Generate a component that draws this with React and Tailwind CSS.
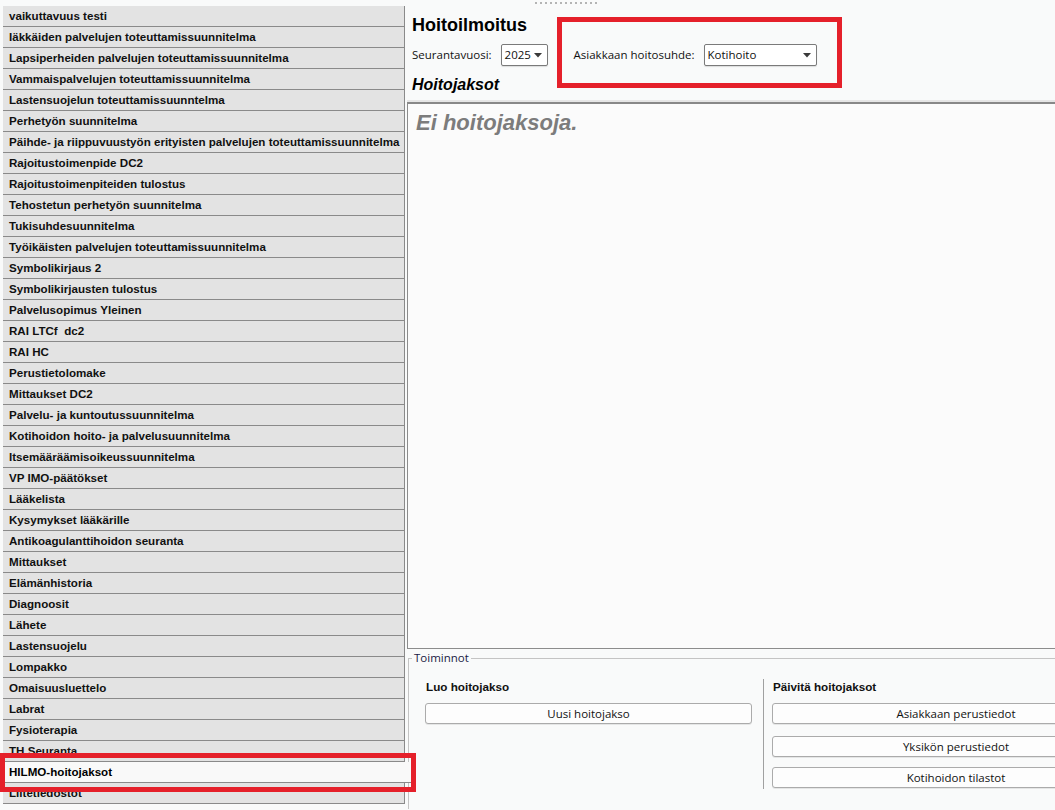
import React from "react";

const items = [
  "vaikuttavuus testi",
  "Iäkkäiden palvelujen toteuttamissuunnitelma",
  "Lapsiperheiden palvelujen toteuttamissuunnitelma",
  "Vammaispalvelujen toteuttamissuunnitelma",
  "Lastensuojelun toteuttamissuunntelma",
  "Perhetyön suunnitelma",
  "Päihde- ja riippuvuustyön erityisten palvelujen toteuttamissuunnitelma",
  "Rajoitustoimenpide DC2",
  "Rajoitustoimenpiteiden tulostus",
  "Tehostetun perhetyön suunnitelma",
  "Tukisuhdesuunnitelma",
  "Työikäisten palvelujen toteuttamissuunnitelma",
  "Symbolikirjaus 2",
  "Symbolikirjausten tulostus",
  "Palvelusopimus Yleinen",
  "RAI LTCf  dc2",
  "RAI HC",
  "Perustietolomake",
  "Mittaukset DC2",
  "Palvelu- ja kuntoutussuunnitelma",
  "Kotihoidon hoito- ja palvelusuunnitelma",
  "Itsemääräämisoikeussuunnitelma",
  "VP IMO-päätökset",
  "Lääkelista",
  "Kysymykset lääkärille",
  "Antikoagulanttihoidon seuranta",
  "Mittaukset",
  "Elämänhistoria",
  "Diagnoosit",
  "Lähete",
  "Lastensuojelu",
  "Lompakko",
  "Omaisuusluettelo",
  "Labrat",
  "Fysioterapia",
  "TH Seuranta",
  "HILMO-hoitojaksot",
  "Liitetiedostot",
];

const arial = { fontFamily: '"Liberation Sans", Arial, sans-serif' };
const ui = { fontFamily: '"Open Sans", "DejaVu Sans", sans-serif' };

function Arrow() {
  return (
    <svg width="8" height="5" viewBox="0 0 8 5" className="shrink-0">
      <path d="M0 0 H8 L4 4.5 Z" fill="#3a3a3a" />
    </svg>
  );
}

function Select({ value, w }) {
  return (
    <div
      className={`h-[22px] ${w} flex items-center justify-between pl-[3px] pr-[5px] bg-white border border-[#7a7a7a] rounded-[2px] shadow-[0_1px_1px_rgba(0,0,0,0.12)] text-[11.5px] text-[#111]`}
      style={ui}
    >
      <span>{value}</span>
      <Arrow />
    </div>
  );
}

function Btn({ children, cls }) {
  return (
    <div
      className={`h-[21px] flex items-center justify-center bg-[#fdfdfd] border border-[#ababab] rounded-[3px] shadow-[0_1px_0_rgba(0,0,0,0.08)] text-[11.5px] text-[#111] ${cls}`}
      style={ui}
    >
      {children}
    </div>
  );
}

export default function App() {
  return (
    <div className="relative w-[1055px] h-[810px] overflow-hidden bg-[#f9fafa] flex">
      {/* left list */}
      <div className="w-[405px] shrink-0 pt-[6px] pl-[3px]">
        {items.map((t, i) => {
          const sel = t === "HILMO-hoitojaksot";
          return (
            <div
              key={i}
              className={
                sel
                  ? "relative z-10 h-[21px] mr-[-8px] bg-[#f9f9f9] border-b border-[#8a8a8a] pl-[6px] flex items-center text-[11.6px] font-bold text-black whitespace-pre"
                  : "h-[21px] bg-[#e3e3e3] border-b border-r border-[#8a8a8a] pl-[6px] flex items-center text-[11.6px] font-bold text-[#111] whitespace-pre"
              }
              style={arial}
            >
              {t}
            </div>
          );
        })}
      </div>

      {/* right panel */}
      <div className="w-[760px] shrink-0 flex flex-col">
        <div className="h-[6px] flex items-center pl-[130px] gap-[3px]">
          {Array.from({ length: 13 }).map((_, i) => (
            <div key={i} className="w-[2px] h-[2px] bg-[#b4b4b4]" />
          ))}
        </div>

        <div className="mt-[8px] pl-[7px] h-[22px] leading-[22px] text-[18px] font-bold text-black" style={arial}>
          Hoitoilmoitus
        </div>

        <div className="mt-[8px] pl-[7px] h-[22px] flex items-center">
          <span className="text-[11.5px] text-[#111]" style={ui}>Seurantavuosi:</span>
          <div className="ml-[9px]">
            <Select value="2025" w="w-[47px]" />
          </div>
          <span className="ml-[26px] text-[11.5px] text-[#111]" style={ui}>Asiakkaan hoitosuhde:</span>
          <div className="ml-[9px]">
            <Select value="Kotihoito" w="w-[113px]" />
          </div>
        </div>

        <div className="mt-[9px] pl-[7px] h-[20px] leading-[20px] text-[16px] font-bold italic text-black" style={arial}>
          Hoitojaksot
        </div>

        <div className="mt-[7px] ml-[2px] h-[547px] bg-[#fbfbfb] border border-[#8c8c8c] border-t-2 border-t-[#888888] shadow-[0_-2px_0_#e6e6e6] pl-[8px] pt-[6px]">
          <div className="text-[22px] leading-[26px] font-bold italic text-[#7c7c7c]" style={arial}>
            Ei hoitojaksoja.
          </div>
        </div>

        <fieldset className="mt-[1px] ml-[3px] border-t border-l border-[#c4c4c4] pl-[16px] pb-[20px]">
          <legend className="ml-[-13px] px-[2px] text-[11.5px] leading-[16px] text-[#1a1a44]" style={ui}>
            Toiminnot
          </legend>
          <div className="mt-[13px] flex">
            <div className="w-[328px] flex flex-col">
              <div className="pl-[1px] h-[16px] leading-[16px] text-[11.7px] font-bold text-[#111]" style={arial}>
                Luo hoitojakso
              </div>
              <Btn cls="mt-[8px] w-[327px]">Uusi hoitojakso</Btn>
            </div>
            <div className="ml-[10px] w-px h-[110px] bg-[#a0a0a0]" />
            <div className="ml-[8px] w-[368px] flex flex-col">
              <div className="pl-[1px] h-[16px] leading-[16px] text-[11.7px] font-bold text-[#111]" style={arial}>
                Päivitä hoitojaksot
              </div>
              <Btn cls="mt-[8px]">Asiakkaan perustiedot</Btn>
              <Btn cls="mt-[12px]">Yksikön perustiedot</Btn>
              <Btn cls="mt-[10px]">Kotihoidon tilastot</Btn>
            </div>
          </div>
        </fieldset>
      </div>

      {/* annotation boxes */}
      <div className="absolute left-[557px] top-[17px] w-[285px] h-[71px] border-[5px] border-[#e5202a] pointer-events-none" />
      <div className="absolute left-0 top-[753px] w-[416px] h-[39px] border-[5px] border-[#e5202a] pointer-events-none z-20" />
    </div>
  );
}
